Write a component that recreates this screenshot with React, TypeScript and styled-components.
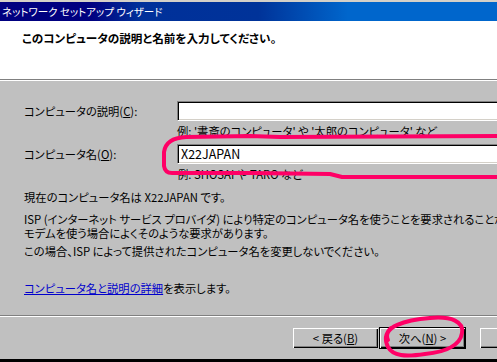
import styled, { createGlobalStyle } from "styled-components";

const GlobalStyle = createGlobalStyle`
  html, body {
    margin: 0;
    padding: 0;
    background: #c0c0c0;
  }
  body {
    font-family: "Noto Sans CJK JP", "DejaVu Sans", sans-serif;
    font-size: 11.3px;
    font-feature-settings: "palt";
    color: #000;
  }
`;

const App = () => {
  return (
    <>
      <GlobalStyle />
      <Window>
        <TitleBar>ネットワーク セットアップ ウィザード</TitleBar>
        <Header>
          <Heading>このコンピュータの説明と名前を入力してください。</Heading>
        </Header>
        <Body>
          <FormGrid>
            <Label>
              コンピュータの説明(<u>C</u>):
            </Label>
            <Field>
              <TextBox />
              <Hint>例: '書斎のコンピュータ' や '太郎のコンピュータ' など</Hint>
            </Field>
            <Label>
              コンピュータ名(<u>O</u>):
            </Label>
            <Field>
              <TextBox>X22JAPAN</TextBox>
              <Hint>例: SHOSAI や TARO など</Hint>
            </Field>
          </FormGrid>
          <Text $gap={3}>現在のコンピュータ名は X22JAPAN です。</Text>
          <Text $gap={8}>
            <Line>ISP (インターネット サービス プロバイダ) により特定のコンピュータ名を使うことを要求されることがあります。</Line>
            <Line>モデムを使う場合によくそのような要求があります。</Line>
          </Text>
          <Text $gap={4}>この場合、ISP によって提供されたコンピュータ名を変更しないでください。</Text>
          <Text $gap={23}>
            <Link>コンピュータ名と説明の詳細</Link>を表示します。
          </Text>
        </Body>
        <Footer>
          <ButtonRow>
            <Button>&lt; 戻る(<u>B</u>)</Button>
            <Button $default>次へ(<u>N</u>) &gt;</Button>
            <Spacer />
            <Button>キャンセル</Button>
          </ButtonRow>
        </Footer>
        <Marks viewBox="0 0 497 362" width="497" height="362">
          <path d="M 497 136 L 280 137 L 250 136 L 186 137 Q 166 138 164 152 L 164 166 Q 165 173 172 173 L 250 173 L 330 174 L 342 177 L 497 177" />
          <path d="M 388 340 C 382 327, 405 320, 430 318 C 452 316, 464 322, 462 333 C 460 346, 445 352, 425 354 C 405 357, 393 356, 388 347 C 385 341, 385 334, 391 328" />
        </Marks>
      </Window>
    </>
  );
};

const Window = styled.div`
  position: relative;
  width: 497px;
  height: 362px;
  overflow: hidden;
  background: #c0c0c0;
  border-top: 2px solid #d4d0c8;
  box-sizing: border-box;
  display: flex;
  flex-direction: column;
`;

const TitleBar = styled.div`
  height: 19px;
  line-height: 19px;
  padding-left: 2px;
  font-size: 10.5px;
  color: #fff;
  white-space: nowrap;
  background: linear-gradient(
    to right,
    #000080 0%,
    #000080 18%,
    #00309a 28%,
    #003399 52%,
    #0066cc 70%,
    #0066cc 100%
  );
`;

const Header = styled.div`
  height: 59px;
  box-sizing: border-box;
  background: #fff;
  padding: 10px 0 0 22px;
  border-bottom: 1px solid #808080;
  box-shadow: 0 1px 0 #fff;
`;

const Heading = styled.div`
  font-size: 11.6px;
  font-weight: bold;
  line-height: 14px;
  white-space: nowrap;
`;

const Body = styled.div`
  height: 234px;
  box-sizing: border-box;
  margin-top: 1px;
  padding: 20px 0 0 24px;
  white-space: nowrap;
`;

const FormGrid = styled.div`
  display: grid;
  grid-template-columns: 153px 1fr;
  align-items: start;
`;

const Label = styled.div`
  height: 20px;
  line-height: 20px;
  u {
    text-decoration: underline;
  }
`;

const Field = styled.div`
  display: flex;
  flex-direction: column;
  padding-bottom: 6px;
`;

const TextBox = styled.div`
  height: 20px;
  width: 340px;
  box-sizing: border-box;
  background: #fff;
  border-top: 1px solid #808080;
  border-left: 1px solid #808080;
  border-bottom: 1px solid #fff;
  box-shadow: inset 1px 1px 0 #000, inset 0 -1px 0 #d4d0c8;
  padding: 0 0 0 3px;
  line-height: 18px;
  font-size: 12.5px;
`;

const Hint = styled.div`
  margin-top: 3px;
  line-height: 14px;
`;

const Text = styled.div<{ $gap: number }>`
  margin-top: ${(p) => p.$gap}px;
  line-height: 14px;
`;

const Line = styled.div`
  height: 14px;
`;

const Link = styled.span`
  color: #0000cc;
  text-decoration: underline;
`;

const Footer = styled.div`
  flex: 1;
  border-top: 1px solid #808080;
  box-shadow: inset 0 1px 0 #fff;
  border-bottom: 3px solid #000;
  padding: 11px 0 0 292px;
`;

const ButtonRow = styled.div`
  display: flex;
  align-items: flex-start;
`;

const Spacer = styled.div`
  flex-shrink: 0;
  width: 13px;
`;

const Button = styled.div<{ $default?: boolean }>`
  flex-shrink: 0;
  width: 87px;
  height: 22px;
  box-sizing: border-box;
  display: flex;
  align-items: center;
  justify-content: center;
  background: #c0c0c0;
  white-space: nowrap;
  border: 1px solid ${(p) => (p.$default ? "#000" : "transparent")};
  box-shadow: inset 1px 1px 0 #fff, inset -1px -1px 0 #000, inset -2px -2px 0 #808080;
  u {
    text-decoration: underline;
  }
`;

const Marks = styled.svg`
  position: absolute;
  top: -2px;
  left: 0;
  pointer-events: none;
  fill: none;
  stroke: #ff0066;
  stroke-width: 4;
  stroke-linecap: round;
  stroke-linejoin: round;
`;

export default App;
